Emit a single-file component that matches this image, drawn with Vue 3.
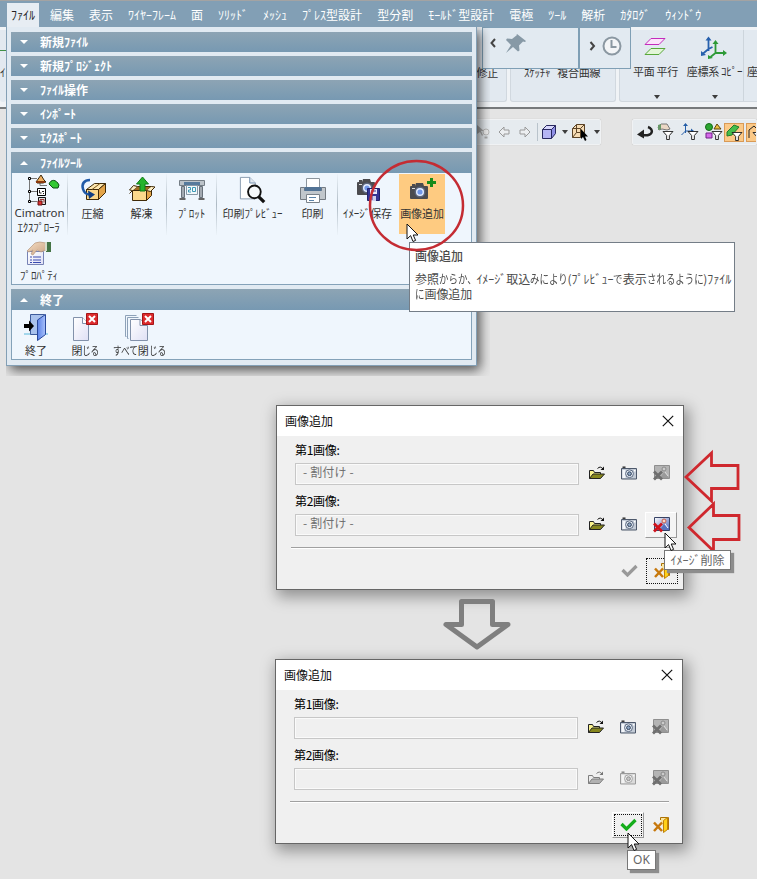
<script setup>
const menus = ['編集', '表示', 'ﾜｲﾔｰﾌﾚｰﾑ', '面', 'ｿﾘｯﾄﾞ', 'ﾒｯｼｭ', 'ﾌﾟﾚｽ型設計', '型分割', 'ﾓｰﾙﾄﾞ型設計', '電極', 'ﾂｰﾙ', '解析', 'ｶﾀﾛｸﾞ', 'ｳｨﾝﾄﾞｳ']
const closedSections = ['新規ﾌｧｲﾙ', '新規ﾌﾟﾛｼﾞｪｸﾄ', 'ﾌｧｲﾙ操作', 'ｲﾝﾎﾟｰﾄ', 'ｴｸｽﾎﾟｰﾄ']
const tools = [
  { icon: 'explorer', lines: ['Cimatron', 'ｴｸｽﾌﾟﾛｰﾗ'], w: 56, sep: true, small: true },
  { icon: 'pack', lines: ['圧縮'], w: 49 },
  { icon: 'unpack', lines: ['解凍'], w: 50, sep: true },
  { icon: 'plot', lines: ['ﾌﾟﾛｯﾄ'], w: 50, sep: true },
  { icon: 'preview', lines: ['印刷ﾌﾟﾚﾋﾞｭｰ'], w: 71 },
  { icon: 'print', lines: ['印刷'], w: 50, sep: true },
  { icon: 'camsave', lines: ['ｲﾒｰｼﾞ保存'], w: 59 },
  { icon: 'camadd', lines: ['画像追加'], w: 46, hot: true }
]
const exits = [
  { icon: 'exit', text: '終了', w: 48 },
  { icon: 'close', text: '閉じる', w: 51 },
  { icon: 'closeall', text: 'すべて閉じる', w: 57 }
]
const dialogs = [
  {
    cls: 'first', value: '- 割付け -',
    rows: [
      { label: '第1画像:', off: [false, false, true] },
      { label: '第2画像:', off: [false, false, false], raised: true }
    ]
  },
  {
    cls: 'second', value: '',
    rows: [
      { label: '第1画像:', off: [false, false, true] },
      { label: '第2画像:', off: [true, true, true] }
    ]
  }
]
// Splits text so that hiragana runs can be drawn narrower than kanji.
const runs = (s) => s.split(/([ぁ-ん、]+)/).filter(Boolean).map((t) => ({ t, kana: /^[ぁ-ん、]/.test(t) }))
const squeeze = (r) => (r.kana ? { marginRight: `${-0.21 * r.t.length}em` } : null)
const tipLines = ['参照からか、ｲﾒｰｼﾞ取込みにより(ﾌﾟﾚﾋﾞｭｰで表示されるように)ﾌｧｲﾙ', 'に画像追加']
</script>

<template>
  <div class="stage">
    <svg class="defs" width="0" height="0">
      <defs>
        <linearGradient id="gBlue" x1="0" y1="0" x2="1" y2="0"><stop offset="0" stop-color="#5b82e8" /><stop offset="1" stop-color="#a9c2fb" /></linearGradient>
        <linearGradient id="gPage" x1="0" y1="0" x2="1" y2="1"><stop offset="0" stop-color="#fff" /><stop offset="1" stop-color="#dfe0f5" /></linearGradient>
        <linearGradient id="gPic" x1="0" y1="0" x2="1" y2="1"><stop offset="0" stop-color="#fff" /><stop offset="1" stop-color="#4a62b8" /></linearGradient>
        <linearGradient id="gSkin" x1="0" y1="0" x2="1" y2="1"><stop offset="0" stop-color="#f6dfc4" /><stop offset="1" stop-color="#c9a183" /></linearGradient>
      </defs>
      <symbol id="explorer" viewBox="0 0 34 32">
        <path d="M3.500 5v22M4 4.500h7M4 17.500h7M4 27.500h7M14 8v3.500h7" fill="none" stroke="#777" />
        <path d="M2.500 3.500h2v2h-2zM2.500 16.500h2v2h-2zM2.500 26.500h2v2h-2z" fill="#fff" stroke="#000" />
        <path d="M10 8l5-7 3 5 2 2-3 1h-6z" fill="#f0b060" stroke="#3a2a10" />
        <path d="M10 8h9" stroke="#8a3a10" stroke-width="2" />
        <path d="M23 10c2-5 7-5 10 1l-1 3h-5z" fill="#32c832" stroke="#0b4a12" />
        <path d="M11.500 14.500h8v7h-8z" fill="#fff" stroke="#000" /><path d="M13.500 16v3h2M16 17.500h2M17 19.500h1" fill="none" stroke="#222" />
        <path d="M12.500 23.500h7v7h-7z" fill="#ddd" stroke="#111" /><path d="M12 27h4v4h-4z" fill="#d33" stroke="#611" /><path d="M14 25.500h4v3" fill="none" stroke="#933" />
      </symbol>
      <symbol id="pack" viewBox="0 0 28 28">
        <path d="M7.500 13.500l8-6h11l-7 6z" fill="#fde6ae" stroke="#3f2a08" /><path d="M7.500 13.500h12v10h-12z" fill="#fbd98c" stroke="#3f2a08" /><path d="M19.500 13.500l7-6v9l-7 7z" fill="#e3a449" stroke="#3f2a08" /><path d="M13 13.500l8-6" stroke="#7a5518" />
        <path d="M11 4C5 4 2.500 8 4 13q1.500 5 6 5.500" fill="none" stroke="#205aa8" stroke-width="2.600" /><path d="M9 14.500l7 4-6 4.500z" fill="#123f83" />
      </symbol>
      <symbol id="unpack" viewBox="0 0 28 28">
        <path d="M4.500 14.500h14v10h-14z" fill="#fbd98c" stroke="#3f2a08" /><path d="M18.500 14.500l5-4v9l-5 5z" fill="#e3a449" stroke="#3f2a08" /><path d="M4.500 14.500l5-4h14l-5 4z" fill="#a06a1e" stroke="#3f2a08" />
        <path d="M4.500 14.500l-3 3M9.500 10.500l-4-1-4 4.500 3 .5M18.500 14.500l4 1 4.500-4.500-3.500-.5" fill="#fdeec4" stroke="#3f2a08" />
        <path d="M14.500 1l6 7h-3.500v7h-5V8H8.500z" fill="#25b32b" stroke="#107a18" />
      </symbol>
      <symbol id="plot" viewBox="0 0 28 26">
        <path d="M1.500 3.500h25v5h-25z" fill="#bcc3c9" stroke="#747d85" /><path d="M6 5h16v3H6z" fill="#567a9c" /><path d="M3.500 9.500h3v11h-3zM21.500 9.500h3v11h-3z" fill="#a3aab1" stroke="#68717a" /><path d="M1.500 22h6M20.500 22h6" stroke="#666" stroke-width="2" />
        <path d="M8.500 8.500h11v9h-11z" fill="#f2f8fb" stroke="#8797a5" /><path d="M10 10.500h2.500v2.500h-2v2h2.500M14.500 10.500h3v4h-3z" fill="none" stroke="#3c99b5" />
      </symbol>
      <symbol id="preview" viewBox="0 0 30 32">
        <path d="M1.500 2.500h10l6 6v17h-16z" fill="#fff" stroke="#8698ac" /><path d="M11.500 2.500v6h6" fill="#dfe7f0" stroke="#6d8bab" />
        <circle cx="16.500" cy="18" r="6.800" fill="#f4f8fb" stroke="#111" stroke-width="2" /><path d="M21 23l6 6" stroke="#111" stroke-width="3.500" />
      </symbol>
      <symbol id="print" viewBox="0 0 28 28">
        <path d="M1.500 11.500h4v3h17v-3h4v12h-25z" fill="#c1c7cc" stroke="#747b82" /><path d="M7.500 2.500h13v10h-13z" fill="#fff" stroke="#8c959d" /><path d="M5.500 11h17v4h-17z" fill="#527395" />
        <path d="M7.500 18.500h13v8h-13z" fill="#fff" stroke="#7a828a" /><path d="M10 21.500h7M10 24.500h5" stroke="#5a83a9" />
      </symbol>
      <symbol id="cam" viewBox="0 0 20 18">
        <path d="M2 4h4l1-3h7l1 3h3q1 0 1 1v11q0 1-1 1H2q-1 0-1-1V5q0-1 1-1z" fill="#4b4b4f" /><path d="M3 3h3" stroke="#4b4b4f" stroke-width="2" /><circle cx="11" cy="10" r="5.500" fill="#5c657c" /><circle cx="11" cy="10" r="4" fill="#e4edff" /><circle cx="11" cy="10" r="2.600" fill="#7297e8" /><path d="M3 6.500h3" stroke="#ddd" />
      </symbol>
      <symbol id="camsave" viewBox="0 0 28 28">
        <use href="#cam" x="1" y="2" width="20" height="18" /><path d="M12.500 12.500h12v12h-12z" fill="#343494" stroke="#20206c" /><path d="M15 13h7v5h-7z" fill="#e8e9fa" /><path d="M15 20h6v5h-6z" fill="#cdcfee" /><path d="M17 20v4M16 15h5" stroke="#343494" />
      </symbol>
      <symbol id="camadd" viewBox="0 0 28 28">
        <use href="#cam" x="0" y="6" width="20" height="18" /><path d="M21 2h3v3h3v3h-3v3h-3V8h-3V5h3z" fill="#168b1b" />
      </symbol>
      <symbol id="props" viewBox="0 0 26 26">
        <path d="M1.500 11.500h16v13h-16z" fill="url(#gPage)" stroke="#7783b5" /><path d="M4 17h2M7 17h8M4 20h2M7 20h8M4 22.500h2M7 22.500h8" stroke="#3a4bb0" />
        <path d="M1 11l8-8q4-2 11 0v7l-5 2-4-2-4 5-2-1 2-4-4 2z" fill="url(#gSkin)" stroke="#ad8b72" stroke-width=".6" /><path d="M20 2h5v10h-5z" fill="#447344" /><path d="M20 2v9" stroke="#d6dbca" stroke-width="2" />
      </symbol>
      <symbol id="exit" viewBox="0 0 28 28">
        <path d="M2 21h24" stroke="#56b7da" /><path d="M8.500 1.500h14v20h-14z" fill="#a9c2ed" stroke="#3d5b9b" /><path d="M23.500 1.500v20l-8 6V7z" fill="url(#gBlue)" stroke="#27479b" /><path d="M2 11h5V7.500l5 5.500-5 5.500V15H2z" fill="#000" />
      </symbol>
      <symbol id="redx" viewBox="0 0 12 12">
        <path d="M.5.5h11v11H.5z" fill="#dd2b2d" stroke="#a41517" /><path d="M3 3l6 6M9 3l-6 6" stroke="#fff" stroke-width="2" />
      </symbol>
      <symbol id="close" viewBox="0 0 28 30">
        <path d="M1.500 5.500h9l6 6v17h-15z" fill="url(#gPage)" stroke="#8291aa" /><path d="M10.500 5.500v6h6" fill="#fff" stroke="#8291aa" /><use href="#redx" x="14" y="1" width="12" height="12" />
      </symbol>
      <symbol id="closeall" viewBox="0 0 32 30">
        <path d="M2.500 24.500h-1v-21h11M4.500 26.500h-1v-21h11" fill="none" stroke="#8da1b8" /><path d="M6.500 7.500h10l7 6v15h-17z" fill="url(#gPage)" stroke="#8291aa" /><path d="M16 7.500v6h7" fill="#fff" stroke="#8291aa" /><use href="#redx" x="18" y="1" width="12" height="12" />
      </symbol>
      <symbol id="cursor" viewBox="0 0 13 20">
        <path d="M1 1v15l3.600-3.400L7 18.500l2.600-1.100L7.200 12H12z" fill="#fff" stroke="#111" />
      </symbol>
      <symbol id="folder" viewBox="0 0 16 16">
        <path d="M.5 13.500v-8h4l1 2h6v2.500" fill="#f8f18b" stroke="#222" /><path d="M.5 13.500l3.500-4.500h11.500l-4 4.500z" fill="#86861c" stroke="#222" /><path d="M8.500 3.500q3-3 5.500.5" fill="none" stroke="#111" /><path d="M15 1.500v3.500h-3.500z" fill="#111" />
      </symbol>
      <symbol id="shot" viewBox="0 0 16 14">
        <path d="M.5 2.500h15v10.500H.5z" fill="#c3cbd6" stroke="#4d586b" /><path d="M1.500 1.200h3" stroke="#333" stroke-width="1.500" /><path d="M1.500 4h3v8h-3z" fill="#f4f7fb" /><circle cx="8.500" cy="7.700" r="3.900" fill="#e9f0f8" stroke="#5a6880" /><circle cx="8.500" cy="7.700" r="1.900" fill="#8fa6c4" stroke="#2f4058" /><path d="M13 4h1.500v1.500H13z" fill="#fff" />
      </symbol>
      <symbol id="imgdel" viewBox="0 0 17 16">
        <path d="M1.500.5h15v13h-15z" fill="url(#gPic)" stroke="#384466" /><circle cx="11" cy="4" r="2" fill="#f8d4c4" stroke="#c75c4b" /><path d="M7 13l4-6 3 3 2 3z" fill="#5871bd" /><path d="M12 7l3 4" stroke="#fff" />
        <path d="M1 6.500l8 8M9 6.500l-8 8" stroke="#d0121b" stroke-width="2.700" />
      </symbol>
      <symbol id="imgdeloff" viewBox="0 0 17 16">
        <path d="M1.500.5h15v13h-15z" fill="#b4b4b4" stroke="#8f8f8f" /><circle cx="11" cy="4" r="2" fill="#ccc" stroke="#8a8a8a" /><path d="M7 13l4-6 3 3 2 3z" fill="#9a9a9a" /><path d="M12 7l3 4" stroke="#ddd" />
        <path d="M1 6.500l8 8M9 6.500l-8 8" stroke="#6f6f6f" stroke-width="2.700" />
      </symbol>
      <symbol id="check" viewBox="0 0 17 13"><path d="M1.500 6l5 5L15.500 2" fill="none" stroke="currentColor" stroke-width="3.200" /></symbol>
      <symbol id="door" viewBox="0 0 17 17">
        <path d="M7.500 4V1.500h8v12h-5" fill="#fbe6a0" stroke="#ad7204" /><path d="M10.500 4.500l4-3v12l-4 3z" fill="#ffd117" stroke="#c08208" /><path d="M1 6.500l8 8.500M9 6.500l-8 8.500" stroke="#c7780c" stroke-width="2.500" />
      </symbol>
      <symbol id="funnel" viewBox="0 0 12 10"><path d="M.5.500h11L7.500 5v4.500h-3V5z" fill="#fff" stroke="#111" /></symbol>
      <symbol id="axes" viewBox="0 0 26 24">
        <path d="M7.500 15V2M7.500 13l-6 5M7.500 13l4-2" fill="none" stroke="#2760ad" stroke-width="1.800" /><path d="M4.500 4.500l3-4 3 4zM0 20v-5l5 4z" fill="#2760ad" />
        <path d="M14.500 17V6M14.500 17h9M14.500 17l-5 4" fill="none" stroke="#2d9a36" stroke-width="1.800" /><path d="M11.500 8l3-4 3 4zM22 14l4 3-4 3zM7 23v-4l5 3z" fill="#2d9a36" />
      </symbol>
    </svg>

    <header class="menubar">
      <span class="menu current">ﾌｧｲﾙ</span>
      <span v-for="m in menus" :key="m" class="menu">{{ m }}</span>
    </header>

    <section class="ribbon">
      <div class="group edge"><i class="green"></i><span>ｲ</span></div>
      <div class="group fix"><span>修正</span></div>
      <div class="group sketch"><span>ｽｹｯﾁｬ</span><span>複合曲線</span></div>
      <div class="group planes">
        <div class="cmd wide">
          <svg width="22" height="22" viewBox="0 0 22 22"><path d="M1 8.500L7 2.500h14l-6 6z" fill="#fbe3fb" stroke="#c42cbc" /><path d="M1 18.500l6-6h14l-6 6z" fill="#e3f6d8" stroke="#58a83a" /></svg>
          <span>平面 平行</span><b class="drop"></b>
        </div>
        <div class="cmd copy">
          <svg width="26" height="24"><use href="#axes" /></svg>
          <span>座標系 ｺﾋﾟｰ</span><b class="drop"></b>
        </div>
        <div class="cmd cut"><span>座</span></div>
      </div>
    </section>

    <div class="quickrow">
      <div class="quick left">
        <svg width="14" height="16" viewBox="0 0 14 16"><path d="M1 1v9l3-2 2 4 1-1-2-4h3z" fill="#aaa" /><circle cx="10" cy="8" r="3" fill="#eee" stroke="#bbb" /><path d="M8.500 13.500h3" stroke="#aaa" stroke-width="2" /></svg>
        <svg class="arr" width="12" height="12" viewBox="0 0 12 12"><path d="M1 6l5-5v3h5v4H6v3z" fill="#eceef0" stroke="#999" /></svg>
        <svg class="arr" width="12" height="12" viewBox="0 0 12 12"><path d="M11 6L6 1v3H1v4h5v3z" fill="#eceef0" stroke="#999" /></svg>
        <i class="bar"></i>
        <svg width="16" height="16" viewBox="0 0 16 16"><path d="M1.500 5.500l4-4h9v8l-4 5h-9z" fill="#8f8fe6" stroke="#282860" /><path d="M1.500 5.500l4-4h9l-4 4z" fill="#d7d7fd" stroke="#282860" /><path d="M2 6h8v8H2z" fill="#b5b5f4" /><path d="M10.500 5.500v9" stroke="#282860" /></svg>
        <b class="drop"></b>
        <svg width="17" height="17" viewBox="0 0 17 17"><path d="M.5 4.500l4-4h8v8l-4 5h-8z" fill="#f6dcb4" stroke="#5b4326" /><path d="M.5 4.500h8v9M8.500 4.500l4-4M4.500.5v8l-4 5M4.500 8.500h8" fill="none" stroke="#5b4326" /><path d="M9 5v10l2-2 2 4 1.500-1-1.500-3.500h3z" fill="#000" /></svg>
        <b class="drop"></b>
      </div>
      <div class="quick right">
        <svg class="undo" width="17" height="14" viewBox="0 0 17 14"><path d="M4 10c13 2 13-6 7-8" fill="none" stroke="#222" stroke-width="2.500" /><path d="M0 9.500l7-5v9z" fill="#222" /></svg>
        <svg width="18" height="18" viewBox="0 0 18 18"><path d="M1 4l3-3h6l3 5-3 1-5-1-3 1z" fill="#ead7c5" stroke="#777" /><path d="M1 2l3-1v5l-3 1z" fill="#679867" /><use href="#funnel" x="5" y="8" width="12" height="9" /></svg>
        <i class="bar"></i>
        <svg width="18" height="18" viewBox="0 0 18 18"><path d="M4.500 10V1M4.500 8h7M4.500 8l-4 4" fill="none" stroke="#245da7" /><path d="M2 3l2.500-3L7 3zM10 5.500l3 2.500-3 2.500z" fill="#245da7" /><use href="#funnel" x="6" y="8" width="12" height="9" /></svg>
        <i class="bar"></i>
        <svg width="18" height="18" viewBox="0 0 18 18"><circle cx="4" cy="4" r="3.500" fill="#2ba631" stroke="#146a18" /><path d="M9 6l3-5 4 5z" fill="#ecc040" stroke="#5e4509" /><path d="M1 10h6v5H1z" fill="#d56bea" stroke="#722088" /><use href="#funnel" x="6" y="8" width="12" height="9" /></svg>
        <div class="hotbox"><svg width="18" height="18" viewBox="0 0 18 18"><path d="M2 8l7-7 5 2-7 8-5 1z" fill="#45bd4b" stroke="#207b2a" /><use href="#funnel" x="6" y="8" width="12" height="9" /></svg></div>
        <div class="hotbox part"><svg width="18" height="18" viewBox="0 0 18 18"><path d="M2 14V6l5-4 3 3h8" fill="none" stroke="#222" /><use href="#funnel" x="5" y="8" width="12" height="9" /></svg></div>
      </div>
    </div>

    <div class="pinbox pin">
      <svg width="44" height="24" viewBox="0 0 44 24"><path d="M8 6L4.500 10 8 14" fill="none" stroke="#444" stroke-width="2" /><path d="M30 1l9 7-1 1-2-.5-4 4 .5 5-1.500 1-5-4.500-7 6 5-8-5-5 1-1.500 5 .5 5-4-.500-1z" fill="#8799a6" /></svg>
    </div>
    <div class="pinbox clock">
      <svg width="38" height="24" viewBox="0 0 38 24"><path d="M4.500 8L8 12l-3.500 4" fill="none" stroke="#444" stroke-width="2" /><circle cx="26" cy="12" r="8.500" fill="#f3f5f7" stroke="#8b98a2" stroke-width="2" /><path d="M25.500 6v7h5" fill="none" stroke="#8b98a2" stroke-width="2" /></svg>
    </div>

    <div class="shade"></div>
    <main class="panel">
      <div v-for="s in closedSections" :key="s" class="head closed"><i class="tri down"></i>{{ s }}</div>
      <div class="head"><i class="tri up"></i>ﾌｧｲﾙﾂｰﾙ</div>
      <div class="body tools">
        <div class="toolrow">
          <div v-for="t in tools" :key="t.icon" class="tool" :class="{ sep: t.sep, hot: t.hot }" :style="{ width: t.w + 'px' }">
            <svg class="ticon" :class="t.icon"><use :href="'#' + t.icon" /></svg>
            <span v-for="(l, i) in t.lines" :key="l" class="tlabel" :class="{ latin: t.small && i === 0, sub: i === 1 }">{{ l }}</span>
          </div>
        </div>
        <div class="tool second"><svg class="ticon props"><use href="#props" /></svg><span class="tlabel">ﾌﾟﾛﾊﾟﾃｨ</span></div>
      </div>
      <div class="head last"><i class="tri up"></i>終了</div>
      <div class="body exits">
        <div v-for="e in exits" :key="e.icon" class="tool" :style="{ width: e.w + 'px' }">
          <svg class="ticon" :class="e.icon"><use :href="'#' + e.icon" /></svg>
          <span class="tlabel"><span v-for="r in runs(e.text)" :key="r.t" :class="{ kana: r.kana }" :style="squeeze(r)">{{ r.t }}</span></span>
        </div>
      </div>
    </main>

    <div class="bigtip">
      <strong>画像追加</strong>
      <p v-for="l in tipLines" :key="l"><span v-for="r in runs(l)" :key="r.t" :class="{ kana: r.kana }" :style="squeeze(r)">{{ r.t }}</span></p>
    </div>

    <section v-for="d in dialogs" :key="d.cls" class="dialog" :class="d.cls">
      <div class="title"><span>画像追加</span><svg width="12" height="12" viewBox="0 0 12 12"><path d="M.8.8l10.400 10.400M11.200.8L.8 11.200" stroke="#111" stroke-width="1.200" /></svg></div>
      <div class="content">
        <div v-for="r in d.rows" :key="r.label" class="row">
          <label>{{ r.label }}</label>
          <div class="line">
            <div class="field">{{ d.value }}</div>
            <div class="btn b1" :class="{ off: r.off[0] }"><svg width="16" height="16"><use href="#folder" /></svg></div>
            <div class="btn b2" :class="{ off: r.off[1] }"><svg width="16" height="14"><use href="#shot" /></svg></div>
            <div class="btn b3" :class="{ raised: r.raised }"><svg width="17" height="16"><use :href="r.off[2] ? '#imgdeloff' : '#imgdel'" /></svg></div>
          </div>
        </div>
        <hr>
        <div class="foot">
          <div class="btn ok"><svg width="17" height="13"><use href="#check" /></svg></div>
          <div class="btn leave"><svg width="17" height="17"><use href="#door" /></svg></div>
        </div>
      </div>
    </section>

    <svg class="overlay" width="757" height="879" viewBox="0 0 757 879" fill="none">
      <ellipse cx="416.500" cy="205.500" rx="46.500" ry="44.500" stroke="#c42c33" stroke-width="2.500" />
      <path d="M686 477l25.500-24v12.500H738v23h-26.500v12.500z" stroke="#cf282e" stroke-width="2.800" />
      <path d="M689 527.500l24.500-23.500v11.500H739v24h-25.500V551z" stroke="#cf282e" stroke-width="2.800" />
      <path d="M461.500 601.500h31v23h15.500L477 647l-31-22.500h15.500z" stroke="#7f7f7f" stroke-width="5" stroke-linejoin="round" />
    </svg>
    <div class="minitip del">ｲﾒｰｼﾞ削除</div>
    <div class="minitip okay">OK</div>
    <svg class="cur c1"><use href="#cursor" /></svg>
    <svg class="cur c2"><use href="#cursor" /></svg>
    <svg class="cur c3"><use href="#cursor" /></svg>
  </div>
</template>

<style>
body { background: #e4e4e4; overflow: hidden; }
</style>

<style scoped>
* { box-sizing: border-box; }
.stage { position: relative; width: 757px; height: 879px; overflow: hidden; background: #e4e4e4; font: 12px/14px "Noto Sans CJK JP", "Liberation Sans", sans-serif; color: #333; white-space: nowrap; }
.defs { position: absolute; }
svg { display: block; flex: none; }
.menubar { display: flex; align-items: flex-start; gap: 15px; height: 27px; padding: 2px 0 0 7px; background: #829fb5; border-top: 1px solid #a3a3a3; color: #fff; }
.menu { height: 24px; line-height: 23px; }
.menu.current { background: #e7edf3; color: #222; padding: 0 4px; margin-right: -4px; }
.ribbon { display: flex; gap: 3px; height: 80px; padding: 3px 0 5px; background: #f0f3f6; font-size: 11px; letter-spacing: -.25px; overflow: hidden; }
.group { flex: none; background: #e2e9f0; border: 1px solid #d1d8df; border-top: 0; border-radius: 0 0 3px 3px; }
.group.edge { width: 6px; margin-right: 0; overflow: hidden; padding-top: 20px; border: 0; }
.edge .green { display: block; width: 6px; height: 1px; background: #3f8f45; }
.edge span { display: block; margin-top: 14px; }
.group.fix { width: 498px; text-align: right; padding: 35px 8px 0 0; }
.group.sketch { display: flex; gap: 7px; width: 106px; padding: 35px 0 0 13px; }
.group.planes { display: flex; width: 160px; margin-left: 0; }
.cmd { display: flex; flex: none; flex-direction: column; align-items: center; height: 68px; }
.cmd.wide { width: 66px; padding-top: 7px; }
.cmd.copy { width: 57px; padding-top: 7px; }
.cmd.cut { align-items: flex-start; border-left: 1px solid #cdd5dc; padding: 34px 0 0 3px; width: 30px; height: 71px; }
.cmd.wide svg { margin: -1px 0 6px 3px; }
.cmd.wide span { margin-left: 5px; }
.cmd.wide .drop { margin-left: 7px; }
.cmd.copy svg { margin: -1px 0 4px -2px; }
.drop { width: 0; height: 0; border: 3px solid transparent; border-top: 4px solid #3d3d3d; border-bottom: 0; }
.cmd .drop { margin-top: 17px; }
.quickrow { display: flex; gap: 31px; padding: 10px 0 0 470px; border-top: 2px solid #777a7c; height: 50px; }
.quick { display: flex; align-items: center; height: 26px; background: #e6ebef; border: 1px solid #f0f2f4; border-radius: 2px; box-shadow: 0 0 1px #bbb; }
.quick.left { width: 131px; gap: 8px; padding-left: 5px; }
.left .arr + .arr { margin-left: 1px; }
.quick.left .bar { margin: 0 -5px 0 -2px; }
.left .drop { margin: 0 -4px 0 -3px; }
.quick.right { width: 125px; gap: 3px; padding-left: 4px; overflow: hidden; }
.bar { width: 1px; height: 18px; background: #b9c3cb; }
.hotbox { flex: none; width: 20px; height: 19px; background: #fbc987; border: 1px solid #d99a56; margin-left: -2px; }
.hotbox.part { margin-left: -1px; }
.pinbox { position: absolute; top: 27px; height: 42px; background: #e2eaf1; border: 1px solid #7f9fb5; }
.pin { left: 482px; width: 97px; padding: 5px 0 0 4px; }
.clock { left: 579px; width: 52px; padding: 6px 0 0 6px; }
.shade { position: absolute; left: 6px; top: 27px; width: 484px; height: 349px; overflow: hidden; }
.shade::before { content: ""; display: block; width: 470px; height: 339px; box-shadow: 4px 4px 11px rgba(0, 0, 0, .65); }
.panel { position: absolute; left: 6px; top: 27px; width: 471px; height: 339px; background: #e1eaf2; border: 1px solid #839fb5; border-top: 0; padding: 5px 4px 0; }
.head { display: flex; align-items: center; height: 21px; padding-left: 9px; gap: 12px; color: #fff; font-weight: 700; background: linear-gradient(#8da4b4, #7799b2); }
.head.closed { height: 20px; margin-bottom: 4px; }
.head.last { margin-top: 4px; }
.tri { border: 4px solid transparent; width: 0; }
.tri.down { border-top-color: #fff; border-bottom: 0; }
.tri.up { border-bottom-color: #fff; border-top: 0; }
.body { background: #eff6fd; border: 1px solid #84a2b9; border-top: 0; }
.body.tools { height: 112px; }
.body.exits { height: 50px; display: flex; padding-top: 2px; }
.toolrow { display: flex; height: 62px; padding-top: 1px; }
.tool { display: flex; flex-direction: column; align-items: center; position: relative; height: 61px; font-size: 11px; }
.tool.sep { border-right: 1px solid; border-image: linear-gradient(#eef5fb, #aebac4, #eef5fb) 1; }
.tool.hot { background: #fecb81; height: 60px; margin-left: 2px; }
.ticon { width: 28px; height: 32px; }
.explorer { width: 34px; margin-left: 6px; }
.camsave { margin-left: 2px; }
.camadd { margin-left: 2px; }
.tlabel { letter-spacing: -.1px; line-height: 14px; color: #333; }
.tlabel.latin { font: 11.500px/14px "Noto Sans", sans-serif; letter-spacing: 0; }
.tlabel.sub { line-height: 14px; letter-spacing: -.3px; margin-left: -2px; }
.second { width: 54px; height: 46px; }
.props { width: 26px; height: 26px; margin-top: 5px; margin-bottom: 2px; }
.exits .ticon { height: 30px; margin-bottom: 1px; }
.exits .closeall { width: 32px; }
.kana { display: inline-block; transform: scaleX(.79); transform-origin: 0 50%; }
.bigtip { position: absolute; left: 409px; top: 242px; width: 326px; height: 70px; padding: 5px 0 0 5px; background: #fff; border: 1px solid #747d87; color: #4c4c4c; }
.bigtip strong { display: block; font-weight: 500; line-height: 15px; margin-bottom: 8px; }
.bigtip p { display: flex; margin: 0; line-height: 15px; letter-spacing: -.05px; }
.dialog { position: absolute; width: 408px; height: 185px; background: #f0f0f0; border: 1px solid #666; box-shadow: 3px 5px 14px 2px rgba(0, 0, 0, .36); }
.first { left: 276px; top: 405px; }
.second.dialog { left: 275px; top: 659px; }
.title { display: flex; justify-content: space-between; align-items: center; height: 30px; background: #fff; padding: 0 9px 1px 8px; color: #111; }
.content { padding: 7px 4px 0 14px; }
.row { padding-left: 4px; height: 51px; color: #000; }
.row label { display: block; line-height: 14px; letter-spacing: -.3px; }
.line { display: flex; align-items: center; margin-top: 6px; height: 22px; }
.field { width: 284px; height: 22px; border: 1px solid #c7c7c7; box-shadow: inset 0 0 0 1px #fafafa; padding-left: 7px; line-height: 16px; color: #707070; flex: none; letter-spacing: .15px; }
.btn { display: flex; align-items: center; justify-content: center; width: 32px; height: 26px; flex: none; padding-bottom: 2px; }
.b1 { margin-left: 2px; }
.b3 { margin-left: 0; }
.off { filter: grayscale(1); opacity: .55; }
.raised { border: 1px solid #fff; border-right-color: #999; border-bottom-color: #999; background: #f4f4f4; padding-bottom: 0; }
hr { border: 0; height: 2px; margin: 2px 9px 0 0; background: #a0a0a0; border-bottom: 1px solid #fff; }
.foot { display: flex; justify-content: flex-end; gap: 1px; padding: 9px 0 0; margin-right: 1px; }
.ok { color: #999; }
.second .ok { color: #15ad1b; border: 1px solid #fff; border-right-color: #999; border-bottom-color: #999; outline: 1px dotted #111; outline-offset: -3px; }
.first .leave { outline: 1px dotted #111; outline-offset: -1px; }
.overlay { position: absolute; left: 0; top: 0; }
.minitip { position: absolute; background: #fff; border: 1px solid #777; box-shadow: 3px 3px 1px #8d8d8d; color: #666; display: flex; align-items: center; justify-content: center; height: 20px; }
.del { left: 664px; top: 550px; width: 67px; }
.okay { left: 627px; top: 850px; width: 29px; font-family: "Noto Sans", sans-serif; }
.cur { position: absolute; width: 13px; height: 20px; }
.c1 { left: 406px; top: 223px; }
.c2 { left: 664px; top: 532px; }
.c3 { left: 627px; top: 832px; }
</style>
